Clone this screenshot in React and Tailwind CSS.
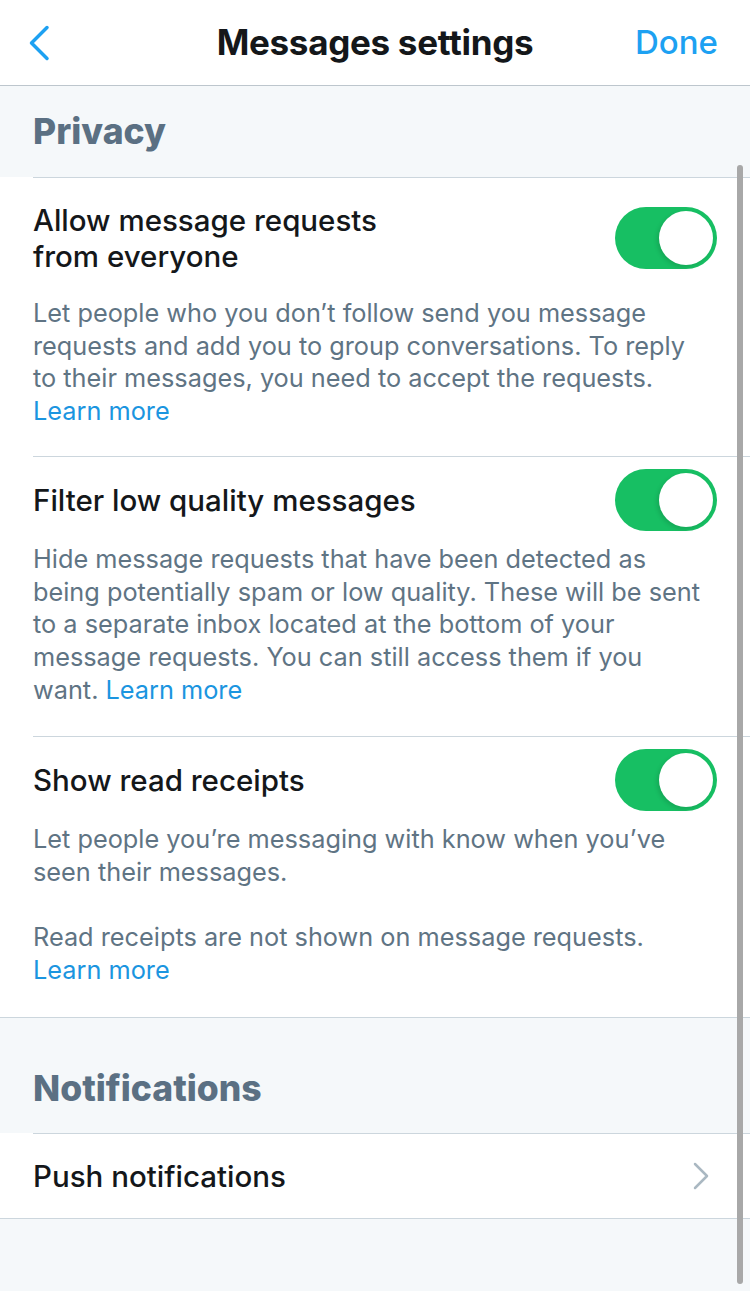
import React, { useState } from "react";

const font = { fontFamily: "Inter, 'Noto Sans', sans-serif" };

const Toggle = ({ on, onChange }) => (
  <button
    type="button"
    onClick={onChange}
    className={`relative shrink-0 -my-[13px] w-[102px] h-[62px] rounded-full transition ${on ? "bg-[#17bf63]" : "bg-[#e6ecf0]"}`}
  >
    <span
      className={`absolute top-[4px] w-[54px] h-[54px] rounded-full bg-white shadow-[-2px_2px_4px_rgba(0,0,0,0.12)] transition-all ${
        on ? "left-[44px]" : "left-[4px]"
      }`}
    />
  </button>
);

const LearnMore = () => <span className="text-[#1b95e0]">Learn more</span>;

// pad = [top padding, gap before description, bottom padding] classes
const SettingRow = ({ title, on, onChange, children, last, pad }) => (
  <div className="pl-[33px] bg-white">
    <div className={`pr-[33px] ${pad[0]} ${pad[2]} ${last ? "" : "border-b border-[#ccd6dd]"}`}>
      <div className="flex items-center justify-between gap-4">
        <div className="text-[29.5px] leading-[36px] font-medium text-[#14171a]">{title}</div>
        <Toggle on={on} onChange={onChange} />
      </div>
      <div className={`${pad[1]} text-[25.3px] leading-[32.7px] text-[#5f7484] whitespace-nowrap`}>{children}</div>
    </div>
  </div>
);

export default function App() {
  const [allow, setAllow] = useState(true);
  const [filter, setFilter] = useState(true);
  const [receipts, setReceipts] = useState(true);

  return (
    <div style={font} className="relative w-[750px] min-h-[1291px] bg-[#f5f8fa] overflow-hidden">
      {/* nav bar */}
      <div className="h-[86px] bg-white border-b border-[#bdc6cd] flex items-center justify-between px-[28px]">
        <button type="button" className="w-[90px] flex items-center">
          <svg width="22" height="36" viewBox="0 0 22 36" fill="none">
            <path d="M19 2.5L3.5 18L19 33.5" stroke="#1da1f2" strokeWidth="3.5" strokeLinecap="round" strokeLinejoin="round" />
          </svg>
        </button>
        <div className="text-[35px] font-bold text-[#14171a] tracking-[-0.3px]">Messages settings</div>
        <button type="button" className="w-[90px] text-right text-[33px] font-medium text-[#1da1f2] pr-[4px]">Done</button>
      </div>

      {/* privacy header */}
      <div className="h-[91px] px-[33px] flex items-center">
        <div className="text-[35.5px] font-extrabold text-[#5b7083]">Privacy</div>
      </div>

      <div className="bg-white">
        <div className="border-t border-[#ccd6dd] ml-[33px]" />
      </div>
      <SettingRow
        title={
          <>
            Allow message requests
            <br />
            from everyone
          </>
        }
        on={allow}
        onChange={() => setAllow(!allow)}
        pad={["pt-[24px]", "mt-[23px]", "pb-[28px]"]}
      >
        <p>
          Let people who you don’t follow send you message
          <br />
          requests and add you to group conversations. To reply
          <br />
          to their messages, you need to accept the requests.
        </p>
        <LearnMore />
      </SettingRow>
      <SettingRow
        title="Filter low quality messages"
        on={filter}
        onChange={() => setFilter(!filter)}
        pad={["pt-[25px]", "mt-[25px]", "pb-[30px]"]}
      >
        <p>
          Hide message requests that have been detected as
          <br />
          being potentially spam or low quality. These will be sent
          <br />
          to a separate inbox located at the bottom of your
          <br />
          message requests. You can still access them if you
          <br />
          want. <LearnMore />
        </p>
      </SettingRow>
      <SettingRow
        title="Show read receipts"
        on={receipts}
        onChange={() => setReceipts(!receipts)}
        pad={["pt-[25px]", "mt-[25px]", "pb-[30px]"]}
        last
      >
        <p>
          Let people you’re messaging with know when you’ve
          <br />
          seen their messages.
        </p>
        <p className="mt-[32.7px]">Read receipts are not shown on message requests.</p>
        <LearnMore />
      </SettingRow>
      <div className="border-t border-[#ccd6dd]" />

      {/* notifications header */}
      <div className="h-[115px] px-[33px] flex items-center pt-[26px]">
        <div className="text-[35.5px] font-extrabold text-[#5b7083]">Notifications</div>
      </div>
      <div className="bg-white">
        <div className="border-t border-[#ccd6dd] ml-[33px]" />
        <div className="h-[84px] px-[33px] flex items-center justify-between">
          <div className="text-[29.5px] font-medium text-[#14171a]">Push notifications</div>
          <svg width="16" height="28" viewBox="0 0 16 28" fill="none" className="mr-[8px]">
            <path d="M2 2L14 14L2 26" stroke="#aab8c2" strokeWidth="2.5" strokeLinecap="round" strokeLinejoin="round" />
          </svg>
        </div>
      </div>
      <div className="border-t border-[#ccd6dd]" />

      {/* scroll indicator */}
      <div className="absolute left-[737px] top-[165px] w-[6px] h-[1119px] rounded-full bg-[#a8a8a8]" />
    </div>
  );
}
